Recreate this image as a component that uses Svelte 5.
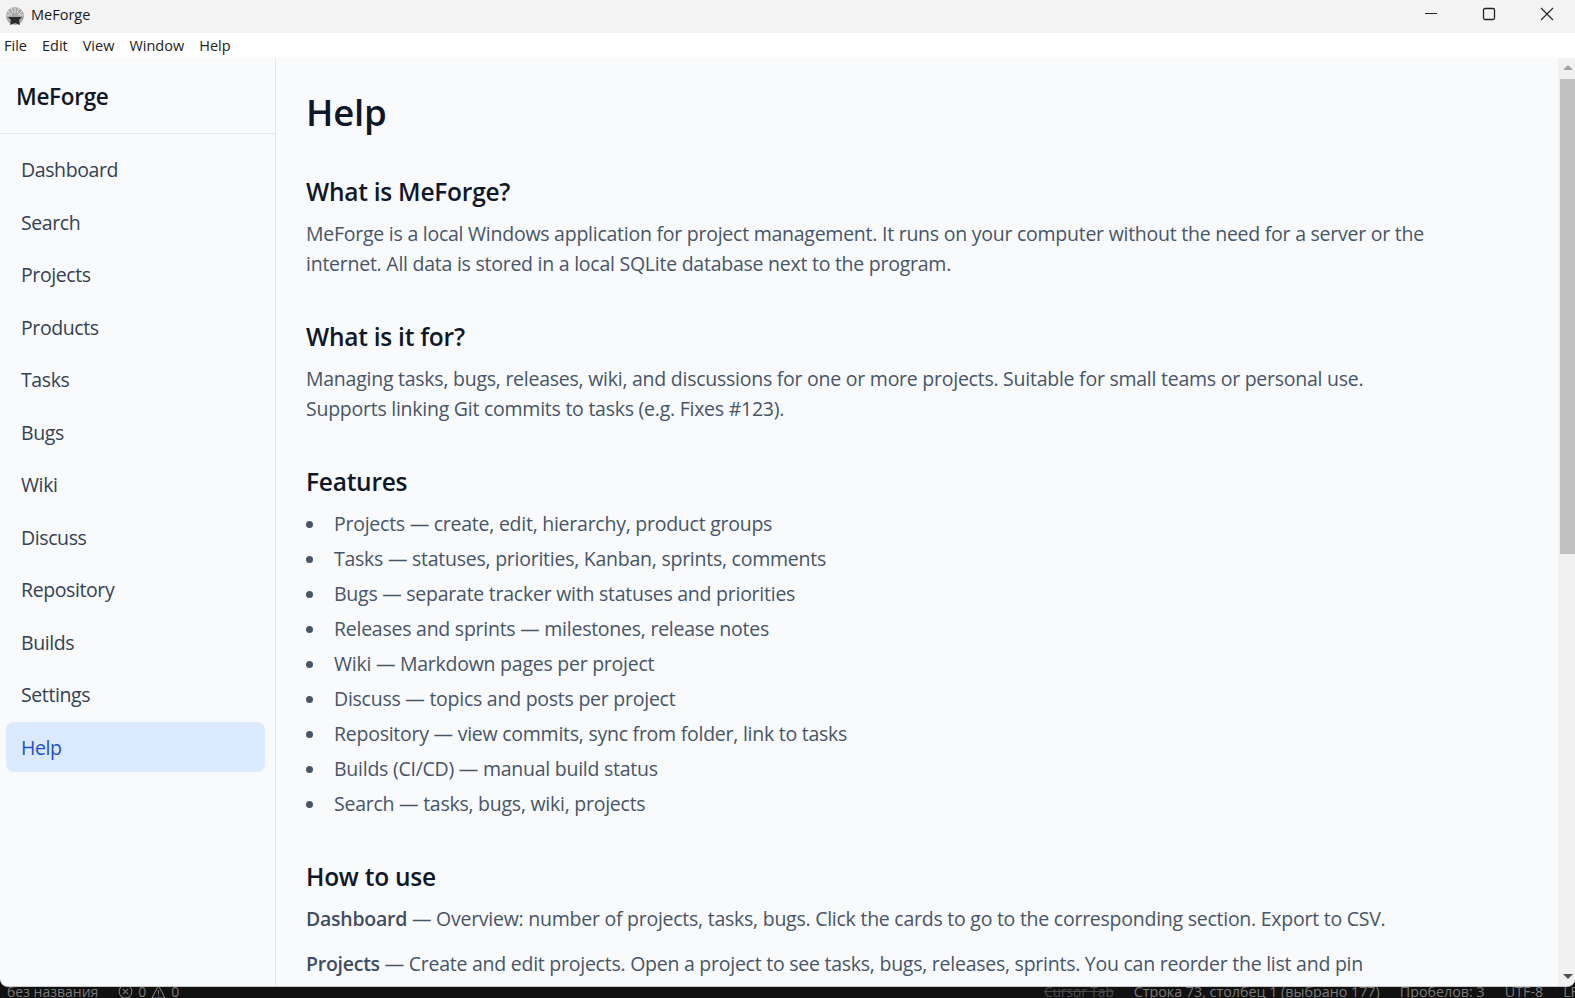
<script>
	const nav = ['Dashboard', 'Search', 'Projects', 'Products', 'Tasks', 'Bugs', 'Wiki', 'Discuss', 'Repository', 'Builds', 'Settings', 'Help'];
	const menu = ['File', 'Edit', 'View', 'Window', 'Help'];
	const features = [
		'Projects — create, edit, hierarchy, product groups',
		'Tasks — statuses, priorities, Kanban, sprints, comments',
		'Bugs — separate tracker with statuses and priorities',
		'Releases and sprints — milestones, release notes',
		'Wiki — Markdown pages per project',
		'Discuss — topics and posts per project',
		'Repository — view commits, sync from folder, link to tasks',
		'Builds (CI/CD) — manual build status',
		'Search — tasks, bugs, wiki, projects'
	];
</script>

<div class="screen">
	<div class="window">
		<header class="titlebar">
			<svg class="appicon" viewBox="0 0 20 20" width="20" height="20">
				<circle cx="10" cy="9" r="9" fill="#a8a8a8" />
				<path d="M3 4l4 4M17 4l-4 4M1.5 8h4M18.500 8h-4M6 1l2 5M14 1l-2 5M10 0.500v6" stroke="#e4e4e4" stroke-width="1" />
				<path d="M3 10h14l-3 3 1 5-5-2-5 2 1-5z" fill="#2b2b2b" />
			</svg>
			<span class="apptitle">MeForge</span>
			<div class="controls">
				<svg viewBox="0 0 58 33" width="58" height="33"><path d="M24 13.5h12" stroke="#222" fill="none" /></svg>
				<svg viewBox="0 0 58 33" width="58" height="33"><rect x="24.5" y="8.5" width="11" height="11" rx="1.5" stroke="#222" stroke-width="1.3" fill="none" /></svg>
				<svg viewBox="0 0 58 33" width="58" height="33"><path d="M24 8l12 12M36 8L24 20" stroke="#222" stroke-width="1.1" fill="none" /></svg>
			</div>
		</header>
		<nav class="menubar">
			{#each menu as m}
				<span>{m}</span>
			{/each}
		</nav>
		<div class="body">
			<aside class="sidebar">
				<div class="brand">MeForge</div>
				<ul class="nav">
					{#each nav as item}
						<li class:active={item === 'Help'}>{item}</li>
					{/each}
				</ul>
			</aside>
			<main class="content">
				<div class="inner">
					<h1>Help</h1>
					<h2>What is MeForge?</h2>
					<p>MeForge is a local Windows application for project management. It runs on your computer without the need for a server or the internet. All data is stored in a local SQLite database next to the program.</p>
					<h2>What is it for?</h2>
					<p>Managing tasks, bugs, releases, wiki, and discussions for one or more projects. Suitable for small teams or personal use. Supports linking Git commits to tasks (e.g. Fixes #123).</p>
					<h2>Features</h2>
					<ul class="features">
						{#each features as f}
							<li>{f}</li>
						{/each}
					</ul>
					<h2>How to use</h2>
					<p class="tight"><strong>Dashboard</strong> — Overview: number of projects, tasks, bugs. Click the cards to go to the corresponding section. Export to CSV.</p>
					<p class="tight"><strong>Projects</strong> — Create and edit projects. Open a project to see tasks, bugs, releases, sprints. You can reorder the list and pin</p>
				</div>
			</main>
			<div class="scrollbar">
				<div class="arrow up"></div>
				<div class="track"><div class="thumb"></div></div>
				<div class="arrow down"></div>
			</div>
		</div>
	</div>
	<footer class="status">
		<div class="left">
			<span>без названия</span>
			<span class="problems">
				<svg viewBox="0 0 14 14" width="15" height="15"><circle cx="7" cy="7" r="6" fill="none" stroke="currentColor" /><path d="M4.5 4.5l5 5M9.5 4.5l-5 5" stroke="currentColor" /></svg>
				<span>0</span>
				<svg viewBox="0 0 14 14" width="15" height="15"><path d="M7 1.5L13 13H1z" fill="none" stroke="currentColor" /><path d="M7 5.5v4M7 10.5v1.2" stroke="currentColor" /></svg>
				<span>0</span>
			</span>
		</div>
		<div class="right">
			<span class="struck">Cursor Tab</span>
			<span>Строка 73, столбец 1 (выбрано 177)</span>
			<span>Пробелов: 3</span>
			<span>UTF-8</span>
			<span>LF</span>
		</div>
	</footer>
</div>

<style>
	:global(body) {
		margin: 0;
		background: #111;
		overflow: hidden;
	}

	.screen {
		display: flex;
		flex-direction: column;
		width: 1575px;
		height: 998px;
		overflow: hidden;
		font-family: "Open Sans", "Noto Sans", sans-serif;
	}

	.window {
		display: flex;
		flex-direction: column;
		height: 987px;
		flex: none;
		background: #f8fafc;
		border-bottom: 1px solid #c9c9c9;
		border-radius: 0 0 8px 8px;
		box-sizing: border-box;
		overflow: hidden;
	}

	.titlebar {
		display: flex;
		align-items: center;
		flex: none;
		height: 33px;
		padding-left: 5px;
		background: #f3f3f3;
	}

	.appicon {
		margin-right: 6px;
	}

	.apptitle {
		padding-bottom: 4px;
		font-size: 14.5px;
		color: #1a1a1a;
	}

	.controls {
		display: flex;
		margin-left: auto;
	}

	.menubar {
		display: flex;
		align-items: center;
		gap: 15px;
		flex: none;
		height: 25px;
		padding-left: 4px;
		font-size: 14.5px;
		color: #222;
		background: #fff;
	}

	.body {
		display: flex;
		flex: 1;
		min-height: 0;
	}

	.sidebar {
		flex: none;
		width: 275px;
		border-right: 1px solid #e2e8f0;
	}

	.brand {
		height: 76px;
		padding: 0 16px;
		box-sizing: border-box;
		line-height: 77px;
		font-size: 22.5px;
		letter-spacing: -0.3px;
		font-weight: 600;
		color: #0f172a;
		border-bottom: 1px solid #e2e8f0;
	}

	.nav {
		display: flex;
		flex-direction: column;
		gap: 2.5px;
		margin: 0;
		padding: 10px 10px 0 6px;
		list-style: none;
	}

	.nav li {
		height: 50px;
		padding: 0 15px;
		line-height: 52px;
		font-size: 19.5px;
		letter-spacing: -0.4px;
		color: #334155;
		border-radius: 7.5px;
	}

	.nav li.active {
		color: #1d4ed8;
		background: #dbeafe;
	}

	.content {
		flex: 1;
		min-width: 0;
		overflow: hidden;
		padding: 29px 30px 0;
	}

	.inner {
		max-width: 1125px;
	}

	h1 {
		margin: 0 0 40px;
		font-size: 36.5px;
		letter-spacing: -0.2px;
		line-height: 50px;
		font-weight: 600;
		color: #0f172a;
	}

	h2 {
		margin: 0 0 12px;
		font-size: 24.5px;
		letter-spacing: -0.25px;
		line-height: 30px;
		font-weight: 600;
		color: #0f172a;
	}

	p {
		margin: 0 0 43px;
		font-size: 19.5px;
		letter-spacing: -0.25px;
		line-height: 30px;
		color: #475569;
	}

	p.tight {
		margin-bottom: 14.5px;
	}

	strong {
		color: #3f4d63;
		font-weight: 600;
	}

	.features {
		margin: 0 0 43px;
		padding-left: 28px;
		list-style: none;
		font-size: 19.5px;
		letter-spacing: -0.25px;
		line-height: 30px;
		color: #475569;
	}

	.features li {
		margin-bottom: 5px;
	}

	.features li::before {
		content: '';
		display: inline-block;
		width: 7px;
		height: 7px;
		margin: 0 21px 2px -28px;
		vertical-align: middle;
		border-radius: 50%;
		background: #475569;
	}

	.scrollbar {
		display: flex;
		flex-direction: column;
		flex: none;
		width: 17px;
		background: #f1f1f1;
	}

	.arrow {
		flex: none;
		height: 21px;
		position: relative;
	}

	.arrow::after {
		content: '';
		position: absolute;
		left: 5px;
		border-left: 5px solid transparent;
		border-right: 5px solid transparent;
	}

	.arrow.up::after {
		top: 7px;
		border-bottom: 5px solid #a3a3a3;
	}

	.arrow.down::after {
		bottom: 7px;
		border-top: 5px solid #505050;
	}

	.track {
		flex: 1;
		padding-left: 2px;
	}

	.thumb {
		height: 475px;
		background: #c1c1c1;
	}

	.status {
		display: flex;
		justify-content: space-between;
		flex: 1;
		height: 11px;
		overflow: hidden;
		font-size: 14.3px;
		line-height: 9px;
		color: #7a7a7a;
		background: #111;
	}

	.left, .right {
		display: flex;
		gap: 20px;
	}

	.left {
		padding-left: 7px;
		font-size: 14px;
	}

	.problems {
		display: flex;
		align-items: flex-start;
		gap: 5px;
	}

	.problems svg {
		margin-top: -3px;
	}

	.right {
		flex: none;
		margin-right: -3px;
	}

	.struck {
		font-size: 13.6px;
		color: #4a4a4a;
		text-decoration: line-through;
	}
</style>
